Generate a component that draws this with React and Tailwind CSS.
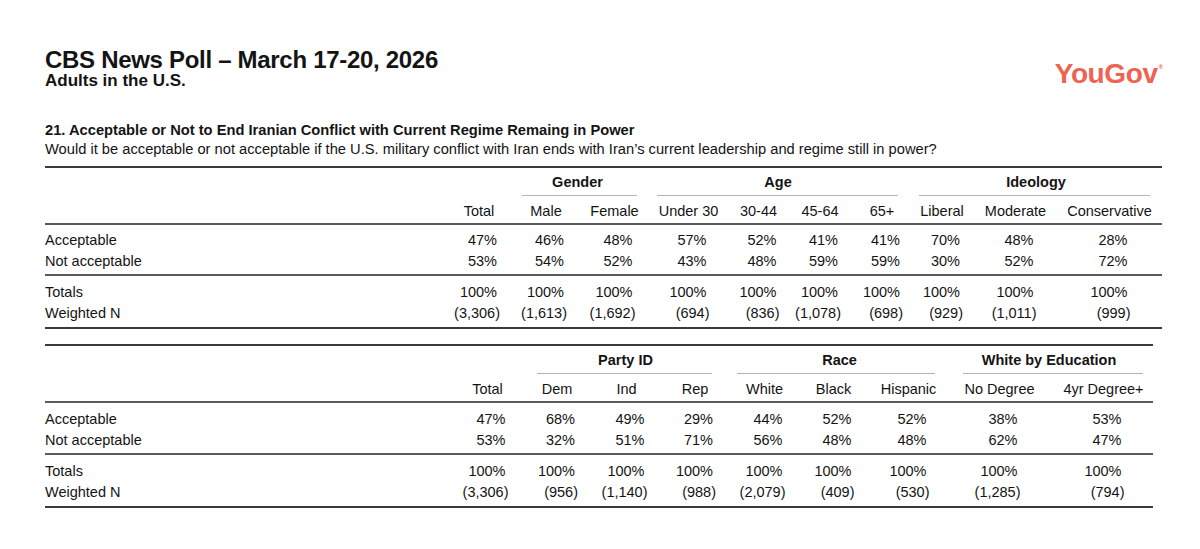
import React from 'react';

const table1 = {
  cols: 'grid-cols-[404px_60px_74px_63px_85px_55px_68px_56px_64px_83px_105px]',
  width: 'w-[1117px]',
  groups: [
    { label: 'Gender', cls: 'col-start-3 col-span-2', line: 'ml-[13px] mr-[9px]' },
    { label: 'Age', cls: 'col-start-5 col-span-4', line: 'ml-[11px] mr-[12px]' },
    { label: 'Ideology', cls: 'col-start-9 col-span-3', line: 'ml-[9px] mr-[12px]' },
  ],
  heads: ['Total', 'Male', 'Female', 'Under 30', '30-44', '45-64', '65+', 'Liberal', 'Moderate', 'Conservative'],
  acc: ['47%', '46%', '48%', '57%', '52%', '41%', '41%', '70%', '48%', '28%'],
  notAcc: ['53%', '54%', '52%', '43%', '48%', '59%', '59%', '30%', '52%', '72%'],
  n: ['(3,306)', '(1,613)', '(1,692)', '(694)', '(836)', '(1,078)', '(698)', '(929)', '(1,011)', '(999)'],
};

const table2 = {
  cols: 'grid-cols-[413px_59px_80px_59px_78px_61px_77px_73px_109px_99px]',
  width: 'w-[1108px]',
  groups: [
    { label: 'Party ID', cls: 'col-start-3 col-span-3', line: 'ml-[20px] mr-[22px]' },
    { label: 'Race', cls: 'col-start-6 col-span-3', line: 'ml-[3px] mr-[10px]' },
    { label: 'White by Education', cls: 'col-start-9 col-span-2', line: 'ml-[18px] mr-[10px]' },
  ],
  heads: ['Total', 'Dem', 'Ind', 'Rep', 'White', 'Black', 'Hispanic', 'No Degree', '4yr Degree+'],
  acc: ['47%', '68%', '49%', '29%', '44%', '52%', '52%', '38%', '53%'],
  notAcc: ['53%', '32%', '51%', '71%', '56%', '48%', '48%', '62%', '47%'],
  n: ['(3,306)', '(956)', '(1,140)', '(988)', '(2,079)', '(409)', '(530)', '(1,285)', '(794)'],
};

const Val = ({ v, paren }) => (
  <div className="flex justify-center">
    <div className="flex justify-end w-[36px]">
      <span className={`whitespace-nowrap ${paren ? 'mr-[-3px]' : ''}`}>{v}</span>
    </div>
  </div>
);

const DataRow = ({ t, label, vals, paren }) => (
  <div className={`grid ${t.cols} h-[21px] items-center`}>
    <div>{label}</div>
    {vals.map((v, i) => <Val key={i} v={v} paren={paren} />)}
  </div>
);

const PollTable = ({ t, className, dataPad }) => (
  <div className={`${t.width} border-t-2 border-b-2 border-[#3a3a3a] ${className}`}>
    {/* banner groups */}
    <div className={`grid ${t.cols} pt-[5px]`}>
      {t.groups.map((g) => (
        <div key={g.label} className={g.cls}>
          <div className="text-center font-bold leading-[18px]">{g.label}</div>
          <div className={`mt-[4px] h-px bg-[#b5b5b5] ${g.line}`}></div>
        </div>
      ))}
    </div>
    <div className={`grid ${t.cols} pt-[6px] pb-[3px] border-b-2 border-[#5a5a5a]`}>
      <div></div>
      {t.heads.map((h) => (
        <div key={h} className="text-center leading-[18px] whitespace-nowrap">{h}</div>
      ))}
    </div>
    <div className={`${dataPad} pb-[2px] border-b-2 border-[#5a5a5a]`}>
      <DataRow t={t} label="Acceptable" vals={t.acc} />
      <DataRow t={t} label="Not acceptable" vals={t.notAcc} />
    </div>
    <div className="pt-[6px] pb-[3px]">
      <DataRow t={t} label="Totals" vals={t.heads.map(() => '100%')} />
      <DataRow t={t} label="Weighted N" vals={t.n} paren />
    </div>
  </div>
);

export default function App() {
  return (
    <div className="w-[1200px] h-[549px] bg-white text-[#141414] font-['Liberation_Sans',Arial,sans-serif] text-[14.5px] overflow-hidden">
      <div className="ml-[45px] w-[1118px] pt-[47px]">
        <div className="flex justify-between items-start">
          <div>
            <h1 className="text-[24px] leading-[26px] font-bold tracking-[-0.3px]">CBS News Poll – March 17-20, 2026</h1>
            <div className="text-[17px] leading-[18px] font-bold -mt-px">Adults in the U.S.</div>
          </div>
          <div className="mt-[13px] flex items-start text-[#ee6351] font-bold">
            <span className="text-[28px] leading-[28px] tracking-[-0.4px]">YouGov</span>
            <span className="text-[6px] leading-[6px] mt-[4px] ml-px">®</span>
          </div>
        </div>
        <div className="mt-[31px] text-[14.7px] font-bold leading-[19px]">
          21. Acceptable or Not to End Iranian Conflict with Current Regime Remaing in Power
        </div>
        <div className="text-[14.7px] leading-[19px]">
          Would it be acceptable or not acceptable if the U.S. military conflict with Iran ends with Iran’s current leadership and regime still in power?
        </div>
        <PollTable t={table1} className="mt-[7px]" dataPad="pt-[5px]" />
        <PollTable t={table2} className="mt-[15px]" dataPad="pt-[6px]" />
      </div>
    </div>
  );
}
